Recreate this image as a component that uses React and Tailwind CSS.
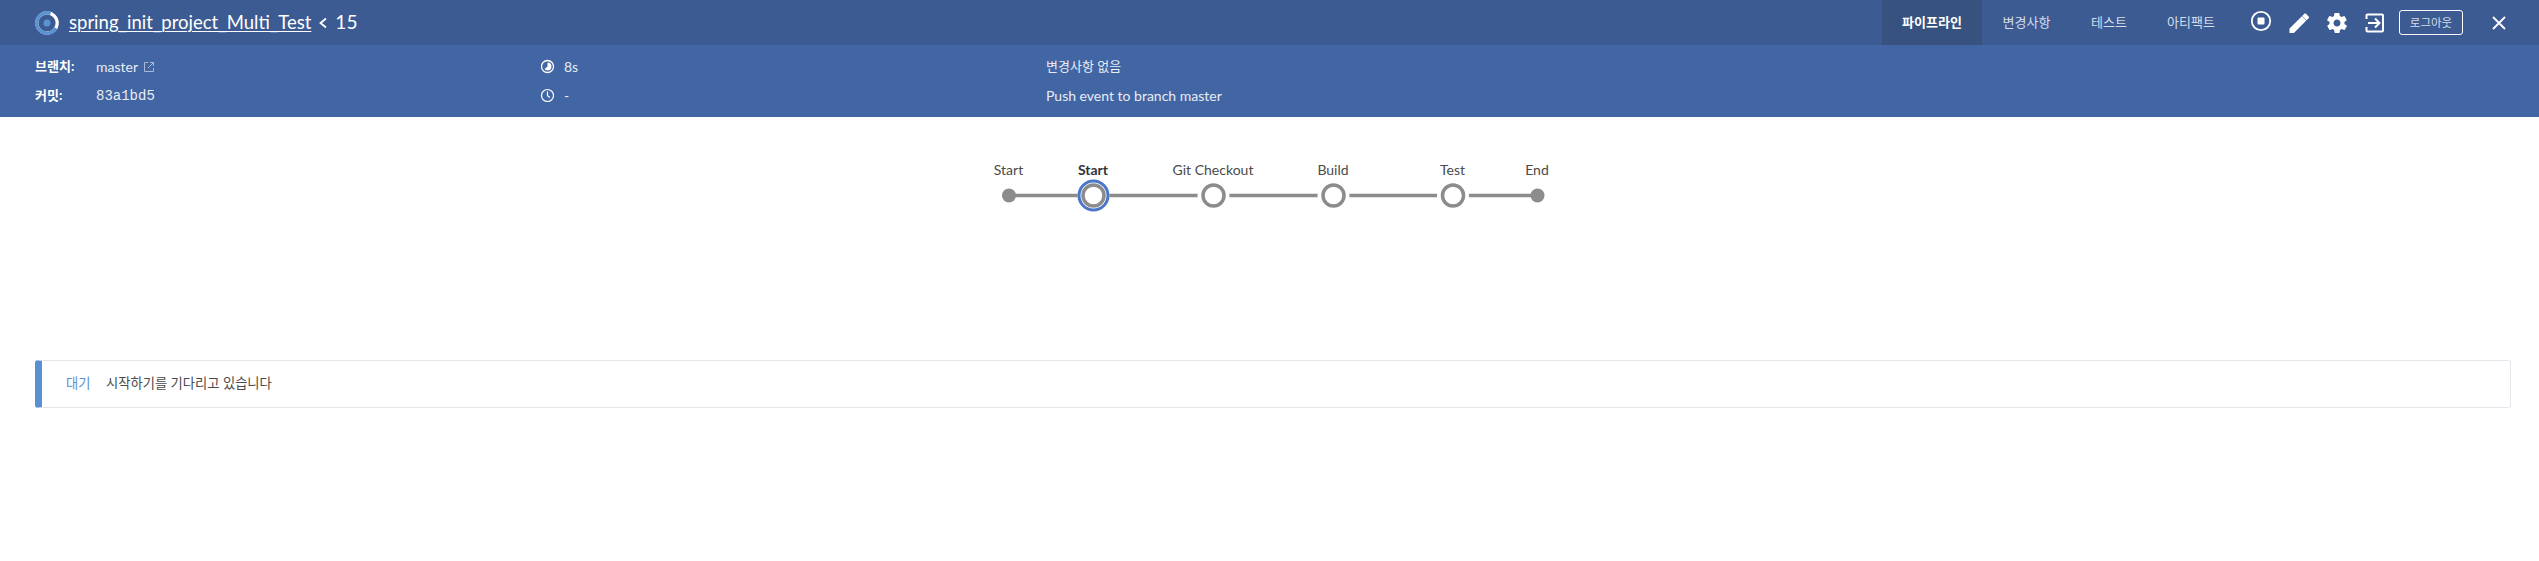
const FONT = "font-['Lato','Noto_Sans_CJK_KR',sans-serif]";

function Spinner() {
  return (
    <svg width="24" height="24" viewBox="0 0 24 24" className="shrink-0">
      <circle cx="12" cy="12" r="10.2" fill="none" stroke="#ffffff" strokeWidth="3.2" />
      <circle cx="12" cy="12" r="10.2" fill="none" stroke="#5b92d0" strokeWidth="3.4" strokeDasharray="46 65" transform="rotate(30 12 12)" />
      <circle cx="12" cy="12" r="3.5" fill="#5b92d0" />
    </svg>
  );
}

function Tab({ children, active, className = "" }) {
  return (
    <div className={`flex h-full items-center justify-center text-[13px] ${active ? "bg-[#38527f] font-bold text-white" : "text-[#d5dcea]"} ${className}`}>
      {children}
    </div>
  );
}

function Meta({ label, value }) {
  return (
    <div className="flex h-[29px] items-center">
      <span className="w-[61px] text-[13px] font-bold text-white">{label}</span>
      {value}
    </div>
  );
}

const NODES = [
  { x: 23.5, label: "Start", small: true },
  { x: 108, label: "Start", active: true },
  { x: 228, label: "Git Checkout" },
  { x: 348, label: "Build" },
  { x: 467.5, label: "Test" },
  { x: 552, label: "End", small: true },
];

function Graph() {
  return (
    <div className="relative mx-auto mt-[40px] h-[60px] w-[576px] translate-x-[3.5px] text-sm text-[#4a4a4a]">
      {NODES.map((n, i) => (
        <span
          key={i}
          style={{ left: n.x }}
          className={`absolute top-[3px] -translate-x-1/2 whitespace-nowrap leading-[20px] ${n.active ? "font-bold text-[#333]" : ""}`}
        >
          {n.label}
        </span>
      ))}
      <svg width="576" height="60" className="absolute left-0 top-0">
        <line x1="23.5" y1="38.5" x2="552" y2="38.5" stroke="#8c8c8c" strokeWidth="3.5" />
        {NODES.map((n, i) =>
          n.small ? (
            <circle key={i} cx={n.x} cy="38.5" r="7" fill="#8c8c8c" />
          ) : (
            <g key={i}>
              <circle cx={n.x} cy="38.5" r="16" fill="#fff" />
              {n.active && <circle cx={n.x} cy="38.5" r="14.500" fill="none" stroke="#4a77c9" strokeWidth="3" />}
              <circle cx={n.x} cy="38.5" r="10.500" fill="#fff" stroke="#8c8c8c" strokeWidth="3.500" />
            </g>
          )
        )}
      </svg>
    </div>
  );
}

export default function App() {
  return (
    <div className={`${FONT} h-[561px] w-full bg-white`}>
      <header className="flex h-[45px] items-center bg-[#3c5b92] pl-[35px] text-white">
        <Spinner />
        <a className="ml-[10px] text-[18.5px] underline decoration-1 underline-offset-2">spring_init_project_Multi_Test</a>
        <svg width="12" height="14" viewBox="0 0 12 14" className="ml-[6px]">
          <path d="M9 2.5 L3.5 7 L9 11.5" fill="none" stroke="#fff" strokeWidth="1.8" />
        </svg>
        <span className="ml-[6px] text-[19px]">15</span>

        <div className="ml-auto flex h-full items-center">
          <Tab active className="w-[100px]">파이프라인</Tab>
          <Tab className="w-[89px]">변경사항</Tab>
          <Tab className="w-[76px]">테스트</Tab>
          <Tab className="w-[88px]">아티팩트</Tab>

          <svg width="22" height="22" viewBox="0 0 22 22" className="ml-[15px] -translate-y-[2px]">
            <circle cx="11" cy="11" r="9.2" fill="none" stroke="#fff" strokeWidth="1.8" />
            <rect x="7.5" y="7.5" width="7" height="7" rx="1" fill="#fff" />
          </svg>
          <svg width="24" height="24" viewBox="0 0 24 24" fill="#fff" className="ml-[15px]">
            <path d="M2.5 17.6V22h4.4L19.3 9.6l-4.4-4.4L2.5 17.6zM21.7 7.2c.5-.5.5-1.2 0-1.7l-2.7-2.7c-.5-.5-1.2-.5-1.7 0l-2.1 2.1 4.4 4.4 2.1-2.1z" />
          </svg>
          <svg width="24" height="24" viewBox="0 0 24 24" fill="#fff" className="ml-[14px]">
            <path d="M19.4 13c.1-.3.1-.7.1-1s0-.7-.1-1l2.1-1.6c.2-.2.2-.4.1-.6l-2-3.5c-.1-.2-.4-.3-.6-.2l-2.5 1c-.5-.4-1.1-.7-1.7-1l-.4-2.6c0-.2-.2-.4-.5-.4h-4c-.3 0-.5.2-.5.4l-.4 2.6c-.6.3-1.2.6-1.7 1l-2.5-1c-.2-.1-.5 0-.6.2l-2 3.5c-.1.2-.1.5.1.6L4.6 11c-.1.3-.1.7-.1 1s0 .7.1 1l-2.1 1.6c-.2.2-.2.4-.1.6l2 3.5c.1.2.4.3.6.2l2.5-1c.5.4 1.1.7 1.7 1l.4 2.6c0 .2.2.4.5.4h4c.3 0 .5-.2.5-.4l.4-2.6c.6-.3 1.2-.6 1.7-1l2.5 1c.2.1.5 0 .6-.2l2-3.5c.1-.2.1-.5-.1-.6L19.4 13zM12 15.5c-1.9 0-3.5-1.6-3.5-3.5s1.6-3.5 3.5-3.5 3.500 1.600 3.500 3.500-1.600 3.500-3.500 3.500z" />
          </svg>
          <svg width="20" height="20" viewBox="0 0 20 20" fill="none" stroke="#fff" strokeWidth="2" className="ml-[16px]">
            <path d="M1.500 6V2.500a1 1 0 0 1 1-1h14.500a1 1 0 0 1 1 1v15a1 1 0 0 1-1 1H2.500a1 1 0 0 1-1-1V14" />
            <path d="M3 10h11M10 5.500l4.500 4.500L10 14.500" />
          </svg>
          <button className="ml-[14px] flex h-[25px] w-[64px] items-center justify-center rounded-[3px] border border-white text-[11.5px] text-[#d5dcea]">
            로그아웃
          </button>
          <svg width="16" height="16" viewBox="0 0 16 16" stroke="#fff" strokeWidth="1.8" className="ml-[28px] mr-[32px]">
            <path d="M2 2L14 14M14 2L2 14" />
          </svg>
        </div>
      </header>

      <section className="grid h-[72px] grid-cols-[505px_506px_1fr] bg-[#4265a3] py-[7px] pl-[35px] text-sm text-[#e8ecf4]">
        <div>
          <Meta
            label="브랜치:"
            value={
              <span className="flex items-center gap-[5px]">
                master
                <svg width="12" height="12" viewBox="0 0 12 12" fill="none" stroke="#a9b8d4" strokeWidth="1">
                  <path d="M5 1.500H1.500v9h9V7M7 1.500h3.500V5M10.500 1.500L5 7" />
                </svg>
              </span>
            }
          />
          <Meta label="커밋:" value={<span className="font-['Liberation_Mono','DejaVu_Sans_Mono',monospace] text-sm">83a1bd5</span>} />
        </div>
        <div>
          <div className="flex h-[29px] items-center gap-[9px]">
            <svg width="15" height="15" viewBox="0 0 15 15">
              <circle cx="7.500" cy="7.500" r="6" fill="none" stroke="#fff" strokeWidth="1.300" />
              <path d="M7.500 3.500a4 4 0 0 1 0 8a4 4 0 0 1-3-1.400L7.500 7.500z" fill="#fff" />
            </svg>
            8s
          </div>
          <div className="flex h-[29px] items-center gap-[9px]">
            <svg width="15" height="15" viewBox="0 0 15 15" fill="none" stroke="#fff" strokeWidth="1.200">
              <circle cx="7.500" cy="7.500" r="6" />
              <path d="M7.500 3.500v4.300l2.500 1.700" />
            </svg>
            -
          </div>
        </div>
        <div>
          <div className="flex h-[29px] items-center text-[13px]">변경사항 없음</div>
          <div className="flex h-[29px] items-center">Push event to branch master</div>
        </div>
      </section>

      <Graph />

      <div className="ml-[35px] mr-[28px] mt-[143px] flex h-[48px] items-center rounded-[3px] border-y border-r border-l-[7px] border-y-[#e4e6eb] border-r-[#e4e6eb] border-l-[#5a8fd0] pl-[24px] text-[13.3px]">
        <span className="w-[40px] text-[#5a8fd0]">대기</span>
        <span className="text-[#4a4a4a]">시작하기를 기다리고 있습니다</span>
      </div>
    </div>
  );
}
